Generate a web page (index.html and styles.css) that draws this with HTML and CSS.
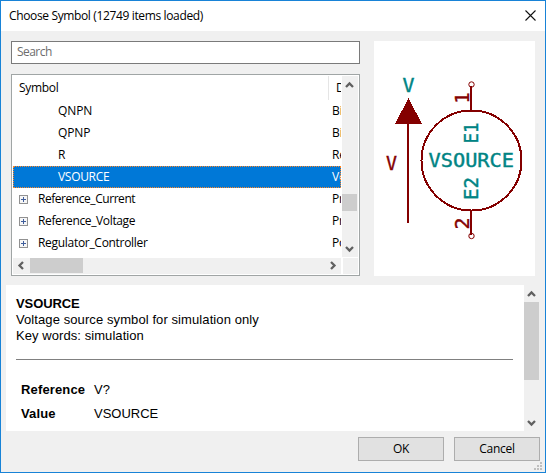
FILE: index.html
```html
<!DOCTYPE html>
<html lang="en">
<head>
<meta charset="utf-8">
<title>Choose Symbol</title>
<link rel="stylesheet" href="styles.css">
</head>
<body>
<div class="dialog">
  <header class="titlebar">
    <span class="title">Choose Symbol (12749 items loaded)</span>
    <svg class="close" width="11" height="11" viewBox="0 0 11 11"><path d="M.5 .5l10 10M10.5 .5l-10 10"/></svg>
  </header>
  <main class="top">
    <div class="left">
      <div class="search">Search</div>
      <div class="tree">
        <div class="list">
          <div class="head"><span class="name">Symbol</span><span class="desc">D</span></div>
          <div class="row leaf"><span class="name">QNPN</span><span class="desc">Bi</span></div>
          <div class="row leaf"><span class="name">QPNP</span><span class="desc">Bi</span></div>
          <div class="row leaf"><span class="name">R</span><span class="desc">Re</span></div>
          <div class="row leaf selected"><span class="name wide">VSOURCE</span><span class="desc">Vo</span></div>
          <div class="row"><svg class="plus" width="9" height="9" viewBox="0 0 9 9"><rect x=".5" y=".5" width="8" height="8"/><path d="M2 4.5h5M4.5 2v5"/></svg><span class="name current">Reference_Current</span><span class="desc">Pr</span></div>
          <div class="row"><svg class="plus" width="9" height="9" viewBox="0 0 9 9"><rect x=".5" y=".5" width="8" height="8"/><path d="M2 4.5h5M4.5 2v5"/></svg><span class="name voltage">Reference_Voltage</span><span class="desc">Pr</span></div>
          <div class="row"><svg class="plus" width="9" height="9" viewBox="0 0 9 9"><rect x=".5" y=".5" width="8" height="8"/><path d="M2 4.5h5M4.5 2v5"/></svg><span class="name">Regulator_Controller</span><span class="desc">Po</span></div>
        </div>
        <div class="vbar">
          <svg class="arrow" width="15" height="17" viewBox="0 0 15 17"><path d="M4 11l3.5-3.5L11 11"/></svg>
          <div class="vthumb"></div>
          <svg class="arrow" width="15" height="17" viewBox="0 0 15 17"><path d="M4 7l3.5 3.5L11 7"/></svg>
        </div>
        <div class="hbar">
          <svg class="arrow" width="17" height="15" viewBox="0 0 17 15"><path d="M10 4L6.500 7.500 10 11"/></svg>
          <div class="hthumb"></div>
          <svg class="arrow" width="17" height="15" viewBox="0 0 17 15"><path d="M7 4l3.500 3.500L7 11"/></svg>
        </div>
        <div class="corner"></div>
      </div>
    </div>
    <svg class="preview" width="161" height="235" viewBox="374 41 161 235">
      <g class="shape">
        <circle cx="471.500" cy="160.500" r="50"/>
        <path d="M471 86v24M471 211v24M408 120v103"/>
        <circle class="pin" cx="471.500" cy="84.500" r="2.700"/>
        <circle class="pin" cx="471.500" cy="236" r="2.700"/>
        <path class="fill" d="M408.500 98L422 124H395z"/>
      </g>
      <g class="teal">
        <text x="402.500" y="92" textLength="12" lengthAdjust="spacingAndGlyphs">V</text>
        <text x="428.500" y="167" textLength="85.500" lengthAdjust="spacingAndGlyphs">VSOURCE</text>
        <text transform="translate(478 143.500) rotate(-90)" textLength="21" lengthAdjust="spacingAndGlyphs">E1</text>
        <text transform="translate(478 200) rotate(-90)" textLength="23" lengthAdjust="spacingAndGlyphs">E2</text>
      </g>
      <g class="maroon">
        <text x="386" y="170" textLength="11" lengthAdjust="spacingAndGlyphs">V</text>
        <text transform="translate(469 103.500) rotate(-90)" textLength="11" lengthAdjust="spacingAndGlyphs">1</text>
        <text transform="translate(469 229.500) rotate(-90)" textLength="12" lengthAdjust="spacingAndGlyphs">2</text>
      </g>
    </svg>
  </main>
  <section class="details">
    <div class="info">
      <div class="part">VSOURCE</div>
      <div class="line about">Voltage source symbol for simulation only</div>
      <div class="line keys">Key words: simulation</div>
      <div class="rule"></div>
      <div class="field"><b class="ref">Reference</b><span>V?</span></div>
      <div class="field"><b>Value</b><span class="val">VSOURCE</span></div>
    </div>
    <div class="dbar">
      <svg class="arrow" width="15" height="17" viewBox="0 0 15 17"><path d="M4 11l3.500-3.500L11 11"/></svg>
      <div class="dthumb"></div>
      <svg class="arrow" width="15" height="17" viewBox="0 0 15 17"><path d="M4 7l3.500 3.500L11 7"/></svg>
    </div>
  </section>
  <footer class="actions">
    <div class="button">OK</div>
    <div class="button">Cancel</div>
  </footer>
  <svg class="grip" width="8" height="8" viewBox="0 0 8 8"><path d="M6 0h2v2H6zM3 3h2v2H3zM6 3h2v2H6zM0 6h2v2H0zM3 6h2v2H3zM6 6h2v2H6z"/></svg>
</div>
</body>
</html>
```
FILE: styles.css
```css
* { box-sizing: border-box; }
body { margin: 0; font: 12px/16px "Open Sans", "Noto Sans", sans-serif; color: #000; }
svg { display: block; flex: none; }
.dialog { position: relative; width: 546px; height: 473px; border: 1px solid #1883d7; background: #f0f0f0; overflow: hidden; }
.titlebar { display: flex; justify-content: space-between; height: 30px; padding: 7px 9px 0 8px; background: #fff; }
.title { letter-spacing: -.36px; white-space: nowrap; }
.close { margin: 2px 0 0; stroke: #111; stroke-width: 1.1; fill: none; }
.top { display: flex; gap: 14px; padding: 10px 10px 0; height: 245px; }
.left { display: flex; flex-direction: column; gap: 10px; width: 349px; }
.search { height: 23px; border: 1px solid #7a7a7a; background: #fff; padding: 2px 5px; color: #6d6d6d; letter-spacing: -.55px; }
.tree { display: grid; grid-template-columns: 328px 16px; grid-template-rows: 181px 16px; gap: 1px; height: 202px; padding: 1px; border: 1px solid #a0a5a5; background: #fff; }
.list { overflow: hidden; }
.head, .row { display: flex; align-items: center; height: 22px; letter-spacing: -.3px; }
.head { height: 24px; padding-left: 6px; }
.head .name { flex: none; width: 310px; height: 24px; line-height: 24px; border-right: 1px solid #e5e5e5; }
.head .desc { padding-left: 7px; }
.row { padding-left: 6px; }
.row .name { flex: none; width: 294px; }
.plus { margin-right: 10px; fill: #f6f6f6; stroke: #919191; }
.plus path { stroke: #3f5d9b; }
.leaf { padding-left: 45px; letter-spacing: -.1px; }
.leaf .name { width: 274px; }
.row .wide { letter-spacing: -.3px; }
.row .current { letter-spacing: -.45px; }
.row .voltage { letter-spacing: -.36px; }
.selected { background: #0078d7; color: #fff; outline: 1px dotted #ff8728; outline-offset: -1px; }
.vbar, .hbar, .corner { background: #f0f0f0; }
.vbar { display: flex; flex-direction: column; }
.vthumb { width: 15px; height: 17px; margin: 101px 0 29px; background: #cdcdcd; }
.hbar { display: flex; justify-content: space-between; }
.hthumb { width: 53px; height: 15px; margin-right: auto; background: #cdcdcd; }
.corner { margin-left: 1px; }
.arrow { fill: none; stroke: #606060; stroke-width: 2.3; }
.preview { background: #fff; }
.shape { fill: none; stroke: #840000; stroke-width: 2; shape-rendering: crispEdges; }
.shape .pin { stroke-width: 1; shape-rendering: auto; }
.shape .fill { fill: #840000; stroke: none; }
.preview text { font: 19px "DejaVu Sans Mono", monospace; stroke-width: .4; }
.teal { fill: #008484; stroke: #008484; }
.maroon { fill: #840000; stroke: #840000; }
.details { display: flex; height: 146px; margin: 9px 6px 0 5px; }
.info { width: 518px; padding: 10px 11px 0 10px; background: #fff; font: 13px/16px "Liberation Sans", Arial, sans-serif; }
.part { font-weight: bold; line-height: 17px; letter-spacing: -.1px; }
.about { letter-spacing: .09px; }
.keys { letter-spacing: .07px; }
.rule { height: 1px; margin: 15px 0 18px; background: #808080; }
.field { display: flex; height: 24px; padding: 4px 0 0 5px; }
.field b { width: 73px; letter-spacing: .15px; }
.dbar { width: 15px; background: #f0f0f0; }
.dthumb { height: 78px; margin-bottom: 34px; background: #cdcdcd; }
.actions { display: flex; justify-content: flex-end; gap: 10px; padding: 6px 5px 0; }
.button { width: 86px; height: 24px; border: 1px solid #adadad; background: #e1e1e1; text-align: center; line-height: 21px; letter-spacing: -.25px; }
.grip { position: absolute; right: 3px; bottom: 2px; fill: #bfbfbf; }
```
